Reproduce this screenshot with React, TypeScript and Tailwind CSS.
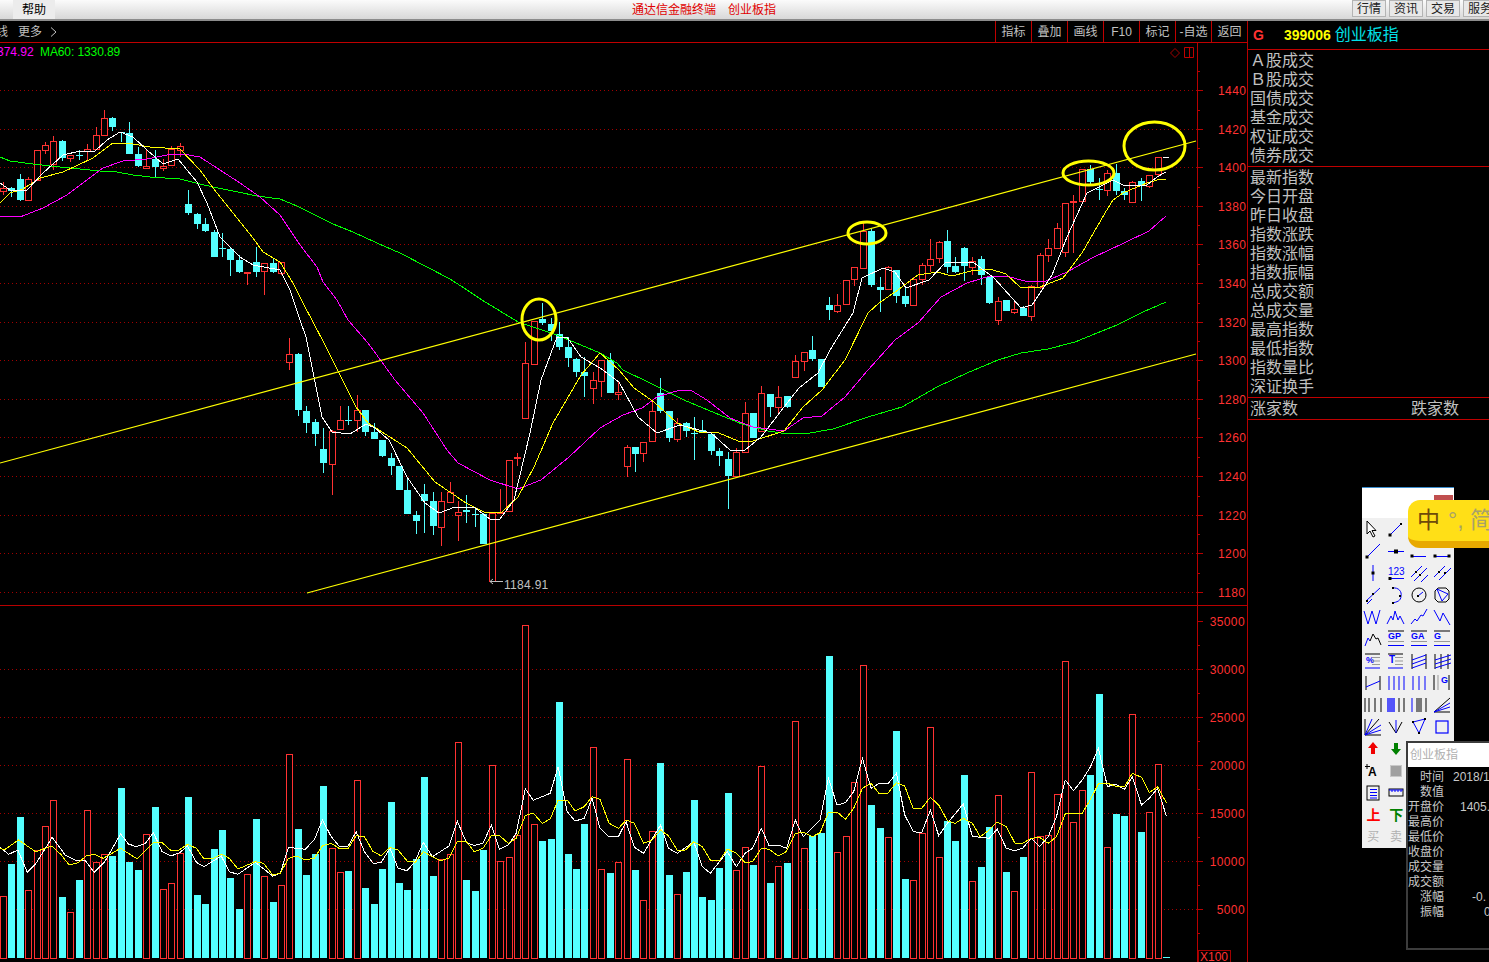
import React from 'react';

const CJK = "[font-family:'Liberation_Sans','Noto_Sans_CJK_SC',sans-serif]";

// bar type per day: r = up (hollow red), c = down (solid cyan)
const TYPES =
  'rccrrrrcrc' + 'rrrccccrcr' + 'rrcccccccr' + 'crcrrccccr' + 'rcrccccccc' +
  'ccrrrcccrr' + 'rrrrcccccc' + 'rrcrrcrrcc' + 'rccccccrrc' + 'rcrcrrcccr' +
  'rrrccrccrr' + 'rrcccrccrc' + 'rcrrrrrrrc' + 'crccrcrrc';

const barX = (i: number) => 2.8 + 8.43 * i;

// [high, body top, body bottom, low] read off the picture
const cA = [
  [545, 565, 575, 585], [562, 565, 573, 592], [522, 538, 600, 603], [532, 538, 602, 602], [451, 451, 540, 540],
  [427, 436, 452, 462], [408, 424, 492, 510], [420, 423, 473, 482], [466, 466, 476, 486], [450, 465, 466, 480],
  [432, 448, 453, 480], [380, 406, 449, 449], [330, 355, 407, 407], [352, 354, 381, 392], [395, 395, 398, 425],
  [366, 400, 461, 461], [441, 463, 498, 500], [450, 498, 503, 505], [450, 476, 500, 530], [477, 497, 503, 513],
  [438, 448, 497, 497], [430, 437, 449, 470], [570, 612, 639, 645], [640, 643, 671, 687], [655, 673, 693, 695],
  [690, 696, 770, 770], [700, 745, 747, 772], [743, 748, 780, 827], [765, 780, 816, 818], [815, 815, 818, 855],
  [741, 787, 815, 830], [790, 790, 815, 885], [773, 790, 815, 819], [787, 787, 820, 825],
].map((r) => r.map((v) => v / 3));

const cB = [
  [113, 163, 188, 210], [160, 162, 330, 348], [318, 333, 368, 398], [357, 366, 402, 438], [385, 447, 488, 518],
  [390, 392, 490, 585], [318, 361, 389, 389], [318, 360, 362, 375], [285, 331, 361, 395], [330, 331, 395, 407],
  [368, 396, 416, 416], [420, 421, 467, 472], [460, 475, 497, 525], [498, 499, 570, 570], [538, 570, 641, 641],
  [632, 646, 663, 702], [553, 582, 603, 698], [575, 603, 678, 705], [575, 604, 683, 737], [545, 577, 607, 607],
  [603, 635, 643, 722], [586, 629, 635, 670], [620, 643, 645, 680], [640, 642, 732, 732], [638, 638, 842, 845],
  [568, 636, 638, 640], [481, 481, 635, 635], [460, 470, 474, 497], [125, 188, 352, 352], [62, 62, 190, 190],
  [8, 57, 68, 75], [55, 72, 93, 122], [65, 103, 140, 150], [112, 142, 173, 200], [175, 178, 215, 232],
  [170, 217, 227, 290], [215, 241, 265, 312], [180, 181, 245, 290], [160, 180, 278, 280], [245, 275, 280, 300],
].map((r) => r.map((v) => 300 + v / 3));

const cC = [
  [735, 742, 800, 830], [742, 742, 762, 815], [725, 727, 760, 785], [600, 634, 725, 725], [533, 580, 632, 640],
  [632, 634, 713, 725], [655, 670, 718, 725], [665, 670, 693, 712], [650, 700, 702, 780], [660, 690, 698, 698],
  [700, 702, 752, 765], [745, 753, 768, 797], [755, 777, 827, 928], [745, 757, 830, 832], [605, 640, 757, 757],
  [640, 640, 714, 715], [558, 580, 695, 695], [582, 583, 622, 650], [558, 590, 620, 640], [588, 588, 622, 624],
  [465, 482, 530, 532], [455, 455, 482, 512], [408, 450, 477, 482], [477, 477, 560, 562], [292, 316, 329, 360],
  [283, 314, 332, 338], [240, 241, 313, 315], [200, 202, 238, 258], [70, 94, 205, 205], [85, 93, 255, 260],
  [230, 261, 269, 335], [198, 200, 265, 268], [210, 211, 287, 310], [262, 289, 312, 320], [232, 238, 317, 317],
  [190, 196, 238, 255], [118, 176, 193, 215], [124, 125, 172, 190], [90, 124, 200, 218], [170, 199, 216, 218],
  [140, 145, 198, 242], [170, 182, 200, 224], [168, 178, 224, 255], [230, 232, 309, 312], [290, 302, 358, 374],
  [300, 301, 332, 333], [305, 326, 334, 341], [318, 323, 347, 348], [255, 259, 349, 362], [160, 166, 262, 268],
  [118, 145, 166, 185], [70, 83, 142, 144], [8, 8, 155, 170],
].map((r) => r.map((v) => 200 + v / 3));

const cD = [
  [585, 604, 608, 760], [508, 508, 605, 605], [495, 507, 545, 555], [535, 568, 570, 600], [510, 520, 572, 588],
  [492, 520, 572, 585], [565, 573, 585, 600], [543, 547, 606, 608], [535, 544, 556, 603], [524, 524, 556, 563],
  [472, 472, 522, 532],
].map((r) => r.map((v) => v / 3));

const candles = [...cA, ...cB, ...cC, ...cD];

const ma60 = '0,157 10,161 33,164 50,166 80,169 100,171 117,172 133,175 150,177 180,179 200,184 213,187 233,191 257,196 280,199 297,206 317,216 333,224 353,232 377,243 400,253 427,267 450,279 467,290 482,300 518,322 557,335 600,353 617,363 623,370 650,383 684,400 715,413 742,424 768,431 788,434 810,433 833,429 868,417 902,407 937,387 967,373 998,360 1021,353 1048,349 1075,342 1097,333 1117,325 1143,312 1166,302';
const ma20 = '0,216 20,217 43,208 67,195 87,180 103,168 123,161 147,159 167,155 183,154 200,157 220,170 240,183 260,197 280,215 300,245 317,267 323,282 337,300 348,320 368,343 395,380 423,413 447,450 458,463 490,480 518,489 541,480 569,457 600,428 623,415 642,408 657,397 680,390 692,391 707,400 730,418 753,427 784,431 803,418 822,416 845,397 868,370 895,340 918,323 941,297 967,283 990,276 1006,276 1025,281 1044,282 1067,272 1094,257 1124,243 1149,231 1166,216';
const ma10 = '0,203 10,193 23,189 40,178 63,172 93,158 113,143 127,143 150,147 180,149 200,170 213,188 233,213 253,238 263,252 280,262 293,283 303,303 324,343 340,375 356,407 368,423 407,448 435,482 466,503 486,513 502,512 518,497 534,467 553,423 581,375 600,353 619,370 634,388 654,402 677,423 699,432 719,433 738,441 753,441 784,431 803,407 822,390 845,360 868,313 879,303 898,290 918,275 937,272 952,276 971,271 990,269 1006,274 1021,288 1040,287 1063,278 1082,253 1105,213 1113,200 1123,193 1137,187 1147,183 1157,180 1166,179';
const ma5 = '0,183 10,190 27,190 43,173 63,155 80,151 95,151 107,140 120,132 133,137 147,150 163,164 178,159 197,182 207,203 220,237 240,257 253,265 280,270 290,290 300,320 306,337 322,417 332,432 350,434 366,424 375,428 389,440 407,477 425,503 439,513 455,507 474,507 490,519 500,519 514,500 530,433 541,380 557,337 567,337 581,357 600,368 619,382 638,417 657,433 680,425 711,433 730,450 745,450 761,437 784,407 799,388 818,373 830,350 853,313 862,278 883,268 895,272 906,288 929,280 946,262 973,262 994,278 1021,308 1032,305 1052,275 1067,237 1087,193 1097,188 1113,180 1123,185 1147,185 1157,177 1166,172';

// volume tops (zoom rows, 3 per pixel, from y=610)
const volTops = [
  859, 762, 621, 841, 721, 649, 571, 861, 907, 810, 601, 757, 733, 738, 534, 756, 780, 673, 591, 838,
  820, 730, 561, 855, 882, 717, 660, 804, 897, 793, 627, 799, 876, 826, 433, 657, 795, 732, 528, 715,
  787, 783, 511, 834, 882, 777, 576, 819, 840, 747, 501, 798, 748, 733, 397, 810, 843, 720, 466, 754,
  742, 676, 46, 643, 693, 687, 276, 732, 777, 642, 412, 778, 789, 757,
  448, 780, 871, 664, 459, 795, 853, 786, 570, 861, 870, 774, 549, 781, 712, 765, 468, 819, 769, 759,
  334, 715, 677, 669, 138, 727, 679, 517, 166, 585, 654, 682, 363, 807, 811, 670, 352, 742, 632, 693,
  495, 814, 771, 651, 556, 786, 844, 741, 487, 679, 676, 553, 154, 637, 541, 495, 252, 712, 612, 618,
  313, 666, 607, 463, 1040,
].map((v) => 610 + v / 3);

const toPts = (raw: number[][], fx: number, x0: number) =>
  raw.map(([x, y]) => `${(x0 + x / fx).toFixed(1)},${(610 + y / 3).toFixed(1)}`).join(' ');

const volWhite =
  toPts([[0,712],[22,733],[45,720],[69,787],[90,762],[132,682],[165,735],[190,750],[215,750],[238,787],[265,755],[305,672],[325,702],[345,710],[368,700],[388,668],[410,725],[432,738],[455,728],[474,707],[497,757],[516,770],[560,738],[580,785],[602,793],[646,757],[690,798],[709,790],[730,712],[772,718],[795,690],[816,630],[838,680],[858,708],[880,710],[901,665],[922,725],[944,760],[964,758],[987,715],[1007,775],[1030,782],[1050,755],[1071,697],[1094,740],[1136,708],[1157,633],[1180,698],[1200,706],[1222,700],[1243,645],[1264,718],[1286,705],[1306,670],[1329,536],[1349,571],[1392,550],[1412,470],[1435,605],[1455,633],[1478,625],[1498,565]], 2.53, 0) + ' ' +
  toPts([[0,655],[20,678],[45,678],[63,635],[83,712],[105,730],[146,645],[165,715],[187,730],[226,695],[247,770],[266,790],[307,725],[329,770],[350,730],[368,715],[389,655],[408,708],[430,705],[450,715],[471,630],[490,680],[531,630],[551,505],[572,585],[592,578],[612,545],[633,445],[654,535],[674,520],[694,522],[715,490],[735,615],[756,665],[776,668],[797,600],[817,677],[838,640],[876,582],[898,678],[917,682],[939,685],[958,657],[980,715],[999,722],[1019,715],[1040,685],[1060,710],[1081,680],[1101,620],[1122,510],[1142,542],[1163,510],[1183,470],[1202,415],[1224,530],[1243,522],[1265,538],[1284,500],[1306,585],[1325,565],[1345,535],[1366,617]], 2.412, 600);

const volYellow =
  toPts([[0,715],[10,720],[47,690],[90,725],[132,708],[155,735],[175,765],[198,758],[218,738],[238,733],[261,745],[305,715],[347,747],[388,698],[410,698],[431,720],[453,720],[474,703],[497,715],[516,747],[540,745],[560,733],[580,745],[602,777],[646,755],[667,760],[690,795],[709,790],[730,745],[752,738],[772,750],[795,745],[816,707],[838,700],[858,715],[881,715],[901,677],[922,680],[944,725],[964,737],[987,712],[1007,720],[1030,753],[1051,757],[1071,725],[1094,740],[1114,752],[1136,745],[1157,695],[1180,695],[1200,725],[1222,715],[1243,677],[1264,677],[1286,700],[1306,685],[1329,617],[1349,609],[1372,640],[1392,627],[1412,570],[1435,570],[1455,603],[1478,590],[1498,560]], 2.53, 0) + ' ' +
  toPts([[0,568],[22,640],[45,655],[63,630],[83,640],[105,700],[124,692],[146,660],[165,677],[187,722],[206,720],[226,695],[247,710],[266,750],[288,752],[307,717],[329,730],[350,758],[368,755],[389,715],[408,718],[430,738],[449,725],[471,670],[490,667],[512,680],[531,668],[551,607],[572,606],[592,628],[612,595],[633,535],[654,520],[674,552],[694,550],[715,518],[735,528],[756,597],[776,595],[797,562],[817,585],[838,632],[857,640],[876,625],[898,640],[917,680],[939,660],[958,636],[980,650],[1001,700],[1019,700],[1040,685],[1060,682],[1081,700],[1101,680],[1122,612],[1142,610],[1163,610],[1183,568],[1202,522],[1224,520],[1243,528],[1265,530],[1284,490],[1306,502],[1325,548],[1345,530],[1366,578]], 2.412, 600);

const RED = '#ff3232';
const CYAN = '#54ffff';
const AXIS = '#b80000';
const priceTicks = [1440, 1420, 1400, 1380, 1360, 1340, 1320, 1300, 1280, 1260, 1240, 1220, 1200, 1180];
const priceY = (i: number) => Math.round(90 + 38.6 * i) + 0.5;
const volTicks = [35000, 30000, 25000, 20000, 15000, 10000, 5000];
const volY = (i: number) => 621 + 48 * i + 0.5;

const Line = ({ pts, col }: { pts: string; col: string }) => (
  <polyline points={pts} fill="none" stroke={col} strokeWidth="1" shapeRendering="crispEdges" />
);

const PriceChart = () => (
  <svg className="block w-[1247px] h-[562px]" viewBox="0 43 1247 562">
    {priceTicks.map((p, i) => (
      <g key={p} shapeRendering="crispEdges">
        <line x1="0" x2="1197" y1={priceY(i)} y2={priceY(i)} stroke="#a00000" strokeDasharray="1 3" />
        <line x1="1197" x2="1203" y1={priceY(i)} y2={priceY(i)} stroke={AXIS} />
        <line x1="1197" x2="1200" y1={priceY(i) - 19} y2={priceY(i) - 19} stroke={AXIS} />
        <text x="1218" y={priceY(i) + 4} fill={RED} fontSize="12" letterSpacing="0.4">{p}</text>
      </g>
    ))}
    <line x1="1197.5" x2="1197.5" y1="43" y2="605" stroke={AXIS} />
    {candles.map((c, i) => {
      const x = Math.round(barX(i));
      const up = TYPES[i] === 'r';
      const col = up ? RED : CYAN;
      return (
        <g key={i} shapeRendering="crispEdges">
          <line x1={x + 0.5} x2={x + 0.5} y1={c[0]} y2={c[3]} stroke={col} />
          {up ? (
            <rect x={x - 2.5} y={Math.round(c[1]) + 0.5} width="6" height={Math.max(1, Math.round(c[2] - c[1]))} fill="#000" stroke={col} />
          ) : (
            <rect x={x - 3} y={c[1]} width="7" height={Math.max(1, c[2] - c[1])} fill={col} />
          )}
        </g>
      );
    })}
    <Line pts={ma60} col="#00ff00" />
    <Line pts={ma20} col="#ff00ff" />
    <Line pts={ma10} col="#ffff00" />
    <Line pts={ma5} col="#ffffff" />
    {/* trend channel */}
    <line x1="0" y1="463" x2="1196" y2="141" stroke="#ffff00" strokeWidth="1.2" />
    <line x1="307" y1="593" x2="1196" y2="354" stroke="#ffff00" strokeWidth="1.2" />
    {/* hand drawn circles */}
    <g fill="none" stroke="#ffff00" strokeWidth="3">
      <ellipse cx="539" cy="319.5" rx="17" ry="20.5" />
      <ellipse cx="867" cy="233" rx="19" ry="11" />
      <ellipse cx="1088.5" cy="173" rx="25.5" ry="12" />
      <ellipse cx="1154.5" cy="146" rx="30.5" ry="24" />
    </g>
    <line x1="1163" x2="1169" y1="157.5" y2="157.5" stroke="#fff" />
    <path d="M490 581.5 H503 M490 581.5 l3 -2.5 M490 581.5 l3 2.5" fill="none" stroke="#c0c0c0" />
    <text x="504" y="589" fill="#c0c0c0" fontSize="12" letterSpacing="0.3">1184.91</text>
    <text x="-3" y="56" fill="#ff00ff" fontSize="12">374.92</text>
    <text x="40" y="56" fill="#00ff00" fontSize="12" letterSpacing="-0.1">MA60: 1330.89</text>
    <path d="M1175 48.5 l4.5 4.5 l-4.5 4.5 l-4.5 -4.5 z" fill="none" stroke="#a00000" />
    <path d="M1184.5 47.5 h9 v10 h-9 z M1189.5 47.5 v10" fill="none" stroke="#c00000" />
  </svg>
);

const VolumeChart = () => (
  <svg className="block w-[1247px] h-[356px]" viewBox="0 606 1247 356">
    {volTicks.map((v, i) => (
      <g key={v} shapeRendering="crispEdges">
        {i > 0 && <line x1="0" x2="1197" y1={volY(i)} y2={volY(i)} stroke="#a00000" strokeDasharray="1 3" />}
        <line x1="1197" x2="1203" y1={volY(i)} y2={volY(i)} stroke={AXIS} />
        <line x1="1197" x2="1200" y1={volY(i) + 24} y2={volY(i) + 24} stroke={AXIS} />
        <text x="1245" y={volY(i) + 4} fill={RED} fontSize="12" textAnchor="end" letterSpacing="0.4">{v}</text>
      </g>
    ))}
    <line x1="1197.5" x2="1197.5" y1="606" y2="962" stroke={AXIS} />
    {volTops.map((top, i) => {
      const x = Math.round(barX(i));
      return TYPES[i] === 'r' ? (
        <rect key={i} x={x - 2.5} y={Math.round(top) + 0.5} width="6" height={958 - Math.round(top)} fill="#000" stroke={RED} shapeRendering="crispEdges" />
      ) : (
        <rect key={i} x={x - 3} y={top} width="7" height={958 - top} fill={CYAN} shapeRendering="crispEdges" />
      );
    })}
    <Line pts={volWhite} col="#ffffff" />
    <Line pts={volYellow} col="#ffff00" />
    <rect x="1198.5" y="950.5" width="32" height="14" fill="#000" stroke="#a00000" />
    <text x="1200" y="961" fill={RED} fontSize="12">X100</text>
  </svg>
);

const tabs = ['指标', '叠加', '画线', 'F10', '标记', '-自选', '返回'];
const quoteRowsA = ['Ａ股成交', 'Ｂ股成交', '国债成交', '基金成交', '权证成交', '债券成交'];
const quoteRowsB = ['最新指数', '今日开盘', '昨日收盘', '指数涨跌', '指数涨幅', '指数振幅', '总成交额', '总成交量', '最高指数', '最低指数', '指数量比', '深证换手'];

const B = '#0000ff';
const K = '#000000';
const G = '#999999';

const lines = (d: string, col = B, w = 1) => <path d={d} fill="none" stroke={col} strokeWidth={w} />;
const dot = (x: number, y: number, s = 3) => <rect x={x - s / 2} y={y - s / 2} width={s} height={s} fill={K} />;
const label = (t: string, x: number, y: number, col = B, size = 9, weight = 700) => (
  <text x={x} y={y} fill={col} fontSize={size} fontWeight={weight}>{t}</text>
);

const paletteIcons: React.ReactNode[] = [
  <path d="M5 3 v13 l3 -3 l3 6 l2 -1 l-3 -5.5 h4 z" fill="#fff" stroke={K} />,
  <>{lines('M5 17 L17 5')}{dot(5, 17)}{dot(16, 6, 2)}</>,
  null,
  null,
  <>{lines('M4 18 L18 4')}{dot(5, 17)}</>,
  <>{lines('M3 11.5 H19')}{dot(11, 11.5, 4)}</>,
  <>{lines('M4 16.5 H18')}{dot(4, 16, 3)}</>,
  <>{lines('M4 16.5 H18')}{dot(4, 16, 3)}{dot(18, 16, 3)}</>,
  <>{lines('M11 3 V19')}{dot(11, 11, 3)}</>,
  <>{label('123', 3, 13, B, 10, 400)}{lines('M4 16.5 H19')}{dot(5, 16.5, 3)}</>,
  <>{lines('M3 15 L14 4 M6 19 L19 6 M13 20 L20 13')}{dot(8, 10, 2)}{dot(12, 13, 2)}</>,
  <>{lines('M3 15 L14 4 M8 18 L20 6')}{dot(8, 10, 2)}{dot(14, 11, 2)}</>,
  <>{lines('M4 17 L18 4 M5 20 L10 15')}{dot(5, 17, 2)}{dot(11, 10, 2)}</>,
  <>{lines('M7 4 C14 3 17 8 16 12 C16 17 12 18 7 19')}{dot(8, 4, 2)}{dot(8, 19, 2)}{dot(15, 12, 2)}</>,
  <><circle cx="11" cy="11" r="7" fill="none" stroke={K} />{lines('M10 12 L15 8')}{dot(10, 12, 2)}</>,
  <><path d="M7 4 H15 L18 7 V15 L15 18 H7 L4 15 V7 Z" fill="none" stroke={K} />{lines('M6 5 L17 10 L11 17 Z')}</>,
  lines('M2 5 L6 18 L10 5 L14 18 L18 4'),
  lines('M2 18 L6 10 L8 14 L10 5 L13 14 L15 10 L19 18'),
  lines('M3 18 L7 13 L9 15 L13 9 L15 10 L19 3'),
  lines('M3 4 L9 15 L12 7 L19 19'),
  <>{lines('M3 18 L6 10 L8 13')}{lines('M8 13 L11 6 L14 11 L16 10 L19 17', K)}</>,
  <>{label('GP', 3, 11)}{lines('M3 3 H19', K)}{lines('M3 13.5 H19', G)}{lines('M3 17.5 H19')}</>,
  <>{label('GA', 3, 11)}{lines('M3 3 H19', K)}{lines('M3 13.5 H19', G)}{lines('M3 17.5 H19')}</>,
  <>{label('G', 3, 11)}{lines('M3 3 H19', K)}{lines('M3 13.5 H19', G)}{lines('M3 17.5 H19')}</>,
  <>{label('%', 4, 13)}{lines('M3 4 H18', K)}{lines('M10 7.5 H18 M10 11 H18 M10 14.5 H18', G)}{lines('M3 18 H18')}</>,
  <>{label('T', 4, 13, B, 10)}{lines('M3 4 H18', K)}{lines('M10 7.5 H18 M10 11 H18 M10 14.5 H18', G)}{lines('M3 18 H18')}</>,
  <>{lines('M4 4 V19 M18 4 V19', K)}{lines('M4 10 L18 5 M4 14 L18 9 M4 18 L18 13')}</>,
  <>{lines('M4 4 V19 M17 4 V19 M10 4 V19', K)}{lines('M4 10 L20 5 M4 14 L20 9 M4 18 L20 13')}</>,
  <>{lines('M4 4 V18 M18 4 V18', K)}{lines('M4 15 L18 9')}</>,
  lines('M4 4 V18 M9 4 V18 M14 4 V18 M19 4 V18'),
  lines('M5 4 V18 M11 4 V18 M17 4 V18'),
  <>{lines('M3 3 V18 M18 3 V18', K)}{lines('M7 3 V18', G)}{label('G', 10, 11)}</>,
  lines('M3 4 V18 M7 4 V18 M13 4 V18 M19 4 V18', K),
  <>{lines('M3 4 V18 M5 4 V18 M7 4 V18 M9 4 V18', B, 1.3)}{lines('M14 4 V18 M19 4 V18', K)}</>,
  <>{lines('M4 4 V18', B)}{lines('M9 4 V18 M11 4 V18 M13 4 V18 M18 4 V18', K)}</>,
  <>{lines('M3 18 H19 M3 18 L19 4', K)}{lines('M3 18 L19 9 M3 18 L19 13')}</>,
  <>{lines('M3 3 V19 H19 M3 19 L17 3', K)}{lines('M3 19 L10 3 M3 19 L19 9 M3 19 L19 14')}</>,
  <>{lines('M4 6 L11 17 L17 6', K)}{lines('M11 4 V17', B)}</>,
  <><path d="M5 6 L17 3 L11 17 Z" fill="none" stroke={B} />{dot(5, 6, 2)}{dot(17, 3, 2)}{dot(11, 17, 2)}</>,
  <rect x="5" y="5" width="12" height="12" fill="none" stroke={B} strokeWidth="1.2" />,
  <path d="M11 4 L16 10 H13 V16 H9 V10 H6 Z" fill="#f00000" />,
  <path d="M9 5 H13 V11 H16 L11 17 L6 11 H9 Z" fill="#008000" />,
  null,
  null,
  <>{label('A', 6, 16, K, 12)}{lines('M5 4 V9 M3 6.5 H8', K)}</>,
  <rect x="5.5" y="5.5" width="11" height="11" fill="#a0a0a0" stroke="#c8c8c8" />,
  null,
  null,
  <><rect x="5" y="4" width="12" height="14" fill="none" stroke={K} />{lines('M8 7.5 H15 M8 10.5 H15 M8 13.5 H15 M8 16 H15')}</>,
  <><rect x="4" y="7" width="14" height="7" fill="none" stroke={K} />{lines('M4 8 H18 M7 8 V10 M10 8 V10 M13 8 V10 M16 8 V10')}</>,
  null,
  null,
];

const Palette = () => (
  <div className="absolute left-[1362px] top-[487px] w-[92px] h-[361px] border-t border-[#3a8ccc] bg-[#f0f0f0]">
    <div className="h-[30px] bg-white pt-[7px] flex justify-end pr-px">
      <div className="w-[19px] h-[16px] bg-[#c04f4f]" />
    </div>
    <div className="grid grid-cols-4 w-[91px]">
      {paletteIcons.map((ic, i) => (
        <div key={i} className="h-[22px] flex items-center justify-center">
          {ic && <svg width="22" height="22" viewBox="0 0 22 22">{ic}</svg>}
        </div>
      ))}
      <div className="h-[22px] flex items-center justify-center text-[14px] leading-none font-bold text-[#ff0000]">上</div>
      <div className="h-[22px] flex items-center justify-center text-[14px] leading-none font-bold text-[#008000]">下</div>
      <div /><div />
      <div className="h-[22px] flex items-center justify-center text-[12px] leading-none text-[#b0b0b0]">买</div>
      <div className="h-[22px] flex items-center justify-center text-[12px] leading-none text-[#b0b0b0]">卖</div>
    </div>
  </div>
);

const tipRows: [string, string, string][] = [
  ['时间', '2018/1', 'ml-[9px]'],
  ['数值', '', ''],
  ['开盘价', '1405.', 'ml-[16px]'],
  ['最高价', '', ''],
  ['最低价', '', ''],
  ['收盘价', '', ''],
  ['成交量', '', ''],
  ['成交额', '', ''],
  ['涨幅', '-0.', 'ml-[28px]'],
  ['振幅', '0', 'ml-[40px]'],
];

const Tooltip = () => (
  <div className="absolute left-[1406px] top-[741px] w-[100px] h-[209px] border-2 border-[#3c3c3c] bg-black">
    <div className="h-[24px] bg-white pl-[2px] flex items-center text-[12px] text-[#b0b0b0]">创业板指</div>
    <div className="pt-[2px]">
      {tipRows.map(([k, v, ml]) => (
        <div key={k} className="flex h-[15px] items-center text-[12px] leading-none text-[#c8c8c8]">
          <span className="w-[36px] shrink-0 text-right">{k}</span>
          {v && <span className={`whitespace-nowrap ${ml}`}>{v}</span>}
        </div>
      ))}
    </div>
  </div>
);

const ImeBar = () => (
  <div className="absolute left-[1408px] top-[500px] w-[110px] h-[48px] rounded-xl bg-[#ffdf17] border-b-[7px] border-[#e8a900] flex items-center pl-[9px] gap-[8px] text-[23px] leading-none whitespace-nowrap">
    <span className="text-[#6e4a0a]">中</span>
    <span className="text-[#a8a26a]">°, 简</span>
  </div>
);

export default function App() {
  return (
    <div className={`relative w-[1489px] h-[962px] overflow-hidden bg-black flex flex-col ${CJK}`}>
      {/* menu bar */}
      <div className="h-[21px] shrink-0 flex items-start bg-gradient-to-b from-[#fbfbfb] to-[#d8d8d8] border-b-2 border-[#8c8c8c]">
        <div className="ml-[13px] w-[42px] h-[19px] bg-[#ececec] flex items-center justify-center text-[12px] text-black">帮助</div>
        <div className="flex-1 h-[19px] flex items-center gap-[12px] text-[12px] text-[#e00000] pl-[577px]">
          <span>通达信金融终端</span>
          <span>创业板指</span>
        </div>
        <div className="flex gap-[3px] shrink-0 w-[137px] overflow-hidden">
          {['行情', '资讯', '交易', '服务'].map((t) => (
            <div key={t} className="w-[34px] h-[17px] shrink-0 bg-[#e8e8e8] border border-[#b4b4b4] flex items-center justify-center text-[12px] text-[#222] whitespace-nowrap">{t}</div>
          ))}
        </div>
      </div>
      <div className="flex flex-1 min-h-0">
        {/* chart column */}
        <div className="w-[1248px] shrink-0 flex flex-col border-r border-[#b80000]">
          <div className="h-[22px] shrink-0 flex items-center border-b border-[#c00000] text-[12px] text-[#c0c0c0]">
            <span className="-ml-[4px] w-[12px] overflow-hidden">线</span>
            <span className="ml-[10px]">更多</span>
            <svg className="ml-[8px]" width="7" height="10" viewBox="0 0 7 10"><path d="M1 0.5 L6 5 L1 9.5" fill="none" stroke="#c0c0c0" /></svg>
            <div className="ml-auto flex h-full">
              {tabs.map((t) => (
                <div key={t} className="w-[36px] border-l border-[#c00000] flex items-center justify-center whitespace-nowrap">{t}</div>
              ))}
            </div>
          </div>
          <PriceChart />
          <div className="h-px shrink-0 bg-[#b80000]" />
          <VolumeChart />
        </div>
        {/* quote panel */}
        <div className="flex-1 min-w-0">
          <div className="h-[29px] flex items-center border-b border-[#c00000] pl-[5px]">
            <span className="text-[14px] font-bold text-[#ff3232] w-[31px]">G</span>
            <span className="text-[14px] font-bold text-[#ffff00]">399006</span>
            <span className="ml-[4px] text-[16px] text-[#00e0e8]">创业板指</span>
          </div>
          <div className="h-[117px] pt-[1px] border-b border-[#c00000] pl-[2px] text-[16px] leading-[19px] text-[#c0c0c0]">
            {quoteRowsA.map((r) => <div key={r}>{r}</div>)}
          </div>
          <div className="h-[231px] pt-[1px] pl-[2px] border-b border-[#c00000] text-[16px] leading-[19px] text-[#c0c0c0]">
            {quoteRowsB.map((r) => <div key={r}>{r}</div>)}
          </div>
          <div className="h-[22px] flex items-center pl-[2px] text-[16px] text-[#c0c0c0] border-b border-[#c00000]">
            <span className="w-[161px]">涨家数</span>
            <span>跌家数</span>
          </div>
        </div>
      </div>
      <Palette />
      <ImeBar />
      <Tooltip />
    </div>
  );
}
